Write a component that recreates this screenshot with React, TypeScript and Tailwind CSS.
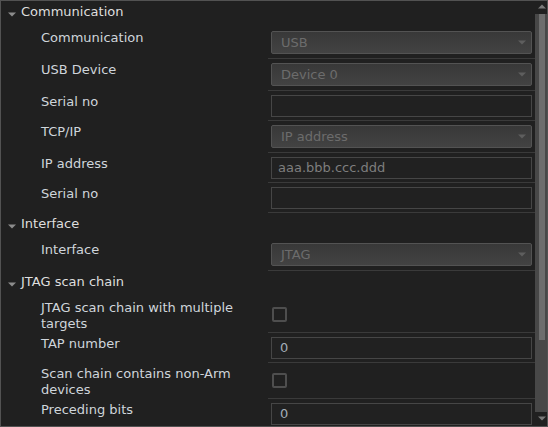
import React from "react";

const font = { fontFamily: '"DejaVu Sans", Verdana, sans-serif' };

function Caret({ className }: { className?: string }) {
  return (
    <svg width="8" height="5" viewBox="0 0 8 5" className={className}>
      <path d="M0 0.5H8L4 4.5Z" fill="currentColor" />
    </svg>
  );
}

function Header({ title }: { title: string }) {
  return (
    <div className="h-[26px] flex items-start pt-[3px] shrink-0">
      <div className="w-[20px] h-[16px] flex items-center justify-end pr-[5px] pt-[4px] text-[#8c8c8c]">
        <Caret />
      </div>
      <span className="text-[13px] leading-[16px] text-[#dedede]">{title}</span>
    </div>
  );
}

function Row({
  label,
  height,
  center,
  children,
}: {
  label: React.ReactNode;
  height: string;
  center?: boolean;
  children: React.ReactNode;
}) {
  return (
    <div className="grid grid-cols-[267px_1fr] shrink-0">
      <div className="pl-[40px] pt-[3px] pr-[8px] text-[13px] leading-[16px] text-[#cfd5db]">
        {label}
      </div>
      <div
        className={
          "border-b border-[#3a3a3a] px-[3px] " +
          height +
          (center ? " flex items-center" : " pt-[4px]")
        }
      >
        {children}
      </div>
    </div>
  );
}

function Select({ value }: { value: string }) {
  return (
    <div className="h-[23px] rounded-[2px] border border-[#535353] bg-gradient-to-b from-[#383838] to-[#434343] flex items-center pl-[9px] pr-[5px]">
      <span className="flex-1 text-[13px] text-[#6c6c6c]">{value}</span>
      <Caret className="text-[#5e5e5e]" />
    </div>
  );
}

function Field({ value, placeholder }: { value?: string; placeholder?: string }) {
  return (
    <div className="h-[22px] border border-[#464646] bg-[#212121] flex items-center px-[6px] text-[13px]">
      {value !== undefined ? (
        <span className="text-[#a3adb8] pl-[2px]">{value}</span>
      ) : (
        <span className="text-[#7e7e7e]">{placeholder}</span>
      )}
    </div>
  );
}

function Check() {
  return <div className="w-[15px] h-[15px] ml-[1px] rounded-[2px] border-2 border-[#4e4e4e]" />;
}

function Scrollbar() {
  return (
    <div className="w-[12px] flex flex-col shrink-0">
      <div className="h-[13px] flex items-start justify-center pt-[3px] pl-[2px] text-[#7a7a7a]">
        <Caret className="rotate-180" />
      </div>
      <div className="flex-1 bg-[#484848] flex flex-col">
        <div className="ml-[4px] w-[6px] h-[326px] bg-[#6d6d6d]" />
      </div>
      <div className="h-[14px] flex items-start justify-center pt-[4px] pl-[2px] text-[#7a7a7a]">
        <Caret />
      </div>
    </div>
  );
}

export default function App() {
  return (
    <div
      style={font}
      className="w-[548px] h-[427px] bg-[#202020] border border-[#525252] flex overflow-hidden"
    >
      <div className="flex-1 flex flex-col overflow-hidden">
        <Header title="Communication" />
        <Row label="Communication" height="h-[32px]">
          <Select value="USB" />
        </Row>
        <Row label="USB Device" height="h-[32px]">
          <Select value="Device 0" />
        </Row>
        <Row label="Serial no" height="h-[30px]">
          <Field value="" />
        </Row>
        <Row label="TCP/IP" height="h-[32px]">
          <Select value="IP address" />
        </Row>
        <Row label="IP address" height="h-[30px]">
          <Field placeholder="aaa.bbb.ccc.ddd" />
        </Row>
        <Row label="Serial no" height="h-[30px]">
          <Field value="" />
        </Row>
        <Header title="Interface" />
        <Row label="Interface" height="h-[32px]">
          <Select value="JTAG" />
        </Row>
        <Header title="JTAG scan chain" />
        <Row label="JTAG scan chain with multiple targets" height="h-[36px]" center>
          <Check />
        </Row>
        <Row label="TAP number" height="h-[30px]">
          <Field value="0" />
        </Row>
        <Row label="Scan chain contains non-Arm devices" height="h-[36px]" center>
          <Check />
        </Row>
        <Row label="Preceding bits" height="h-[30px]">
          <Field value="0" />
        </Row>
      </div>
      <Scrollbar />
    </div>
  );
}
